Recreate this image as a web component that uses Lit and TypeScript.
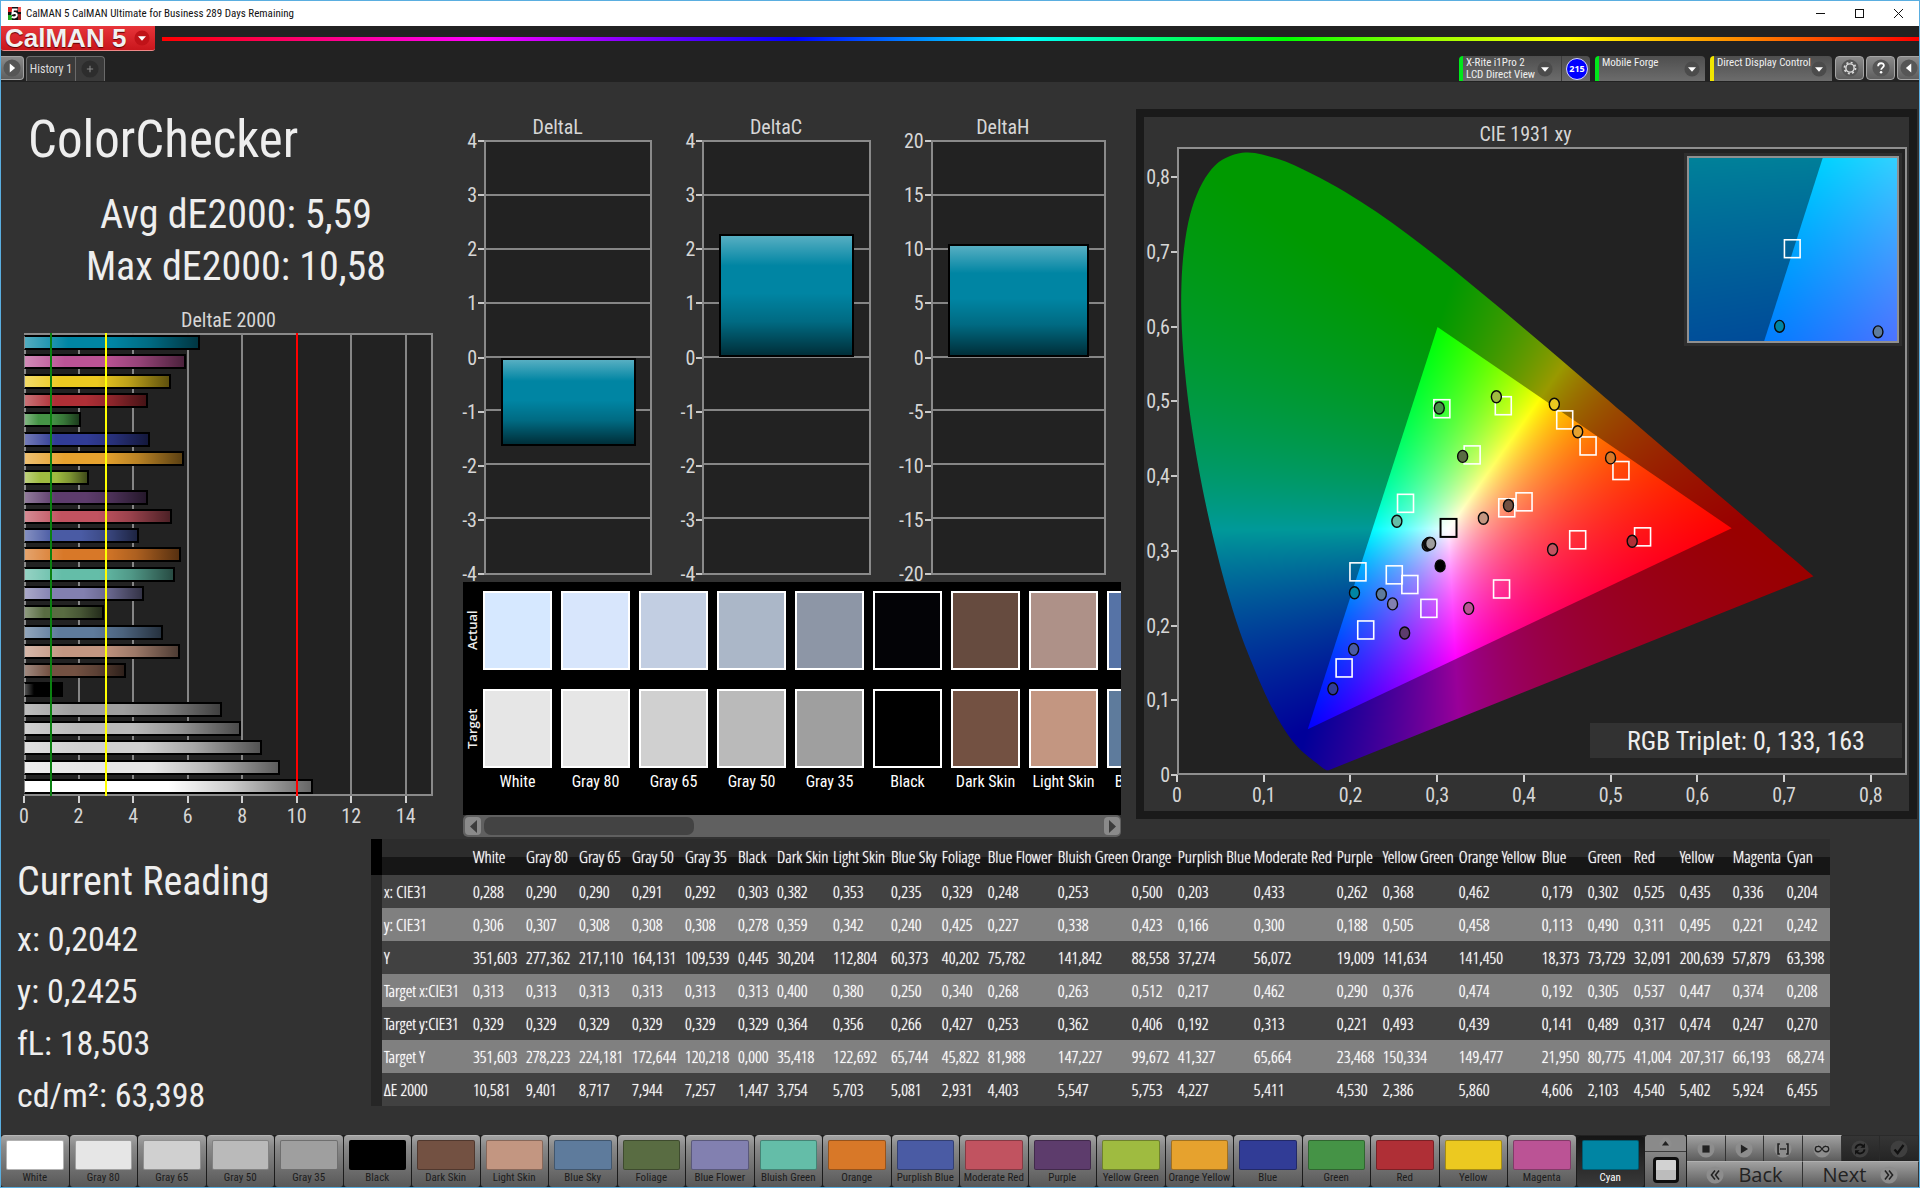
import { LitElement, html, svg, css } from "lit";
import { customElement } from "lit/decorators.js";

interface Patch {
  name: string;
  color: string;
  /** x, y, Y, target x, target y, target Y, dE 2000 as shown in the table */
  v: string[];
  /** relative width of the table column */
  w: number;
}

const p = (name: string, color: string, w: number, values: string): Patch => ({
  name,
  color,
  w,
  v: values.split(" "),
});

const PATCHES: Patch[] = [
  p("White", "#ffffff", 53, "0,288 0,306 351,603 0,313 0,329 351,603 10,581"),
  p("Gray 80", "#e6e6e6", 53, "0,290 0,307 277,362 0,313 0,329 278,223 9,401"),
  p("Gray 65", "#d0d0d0", 53, "0,290 0,308 217,110 0,313 0,329 224,181 8,717"),
  p("Gray 50", "#bababa", 53, "0,291 0,308 164,131 0,313 0,329 172,644 7,944"),
  p("Gray 35", "#9f9f9f", 53, "0,292 0,308 109,539 0,313 0,329 120,218 7,257"),
  p("Black", "#000000", 39, "0,303 0,278 0,445 0,313 0,329 0,000 1,447"),
  p("Dark Skin", "#735142", 56, "0,382 0,359 30,204 0,400 0,364 35,418 3,754"),
  p("Light Skin", "#c39681", 58, "0,353 0,342 112,804 0,380 0,356 122,692 5,703"),
  p("Blue Sky", "#5e7b9c", 51, "0,235 0,240 60,373 0,250 0,266 65,744 5,081"),
  p("Foliage", "#596c42", 46, "0,329 0,425 40,202 0,340 0,427 45,822 2,931"),
  p("Blue Flower", "#8280b0", 70, "0,248 0,227 75,782 0,268 0,253 81,988 4,403"),
  p("Bluish Green", "#64bda8", 74, "0,253 0,338 141,842 0,263 0,362 147,227 5,547"),
  p("Orange", "#d87828", 46, "0,500 0,423 88,558 0,512 0,406 99,672 5,753"),
  p("Purplish Blue", "#4a5ba4", 76, "0,203 0,166 37,274 0,217 0,192 41,327 4,227"),
  p("Moderate Red", "#c15360", 83, "0,433 0,300 56,072 0,462 0,313 65,664 5,411"),
  p("Purple", "#5d3c6c", 46, "0,262 0,188 19,009 0,290 0,221 23,468 4,530"),
  p("Yellow Green", "#9fbb40", 76, "0,368 0,505 141,634 0,376 0,493 150,334 2,386"),
  p("Orange Yellow", "#e6a22e", 83, "0,462 0,458 141,450 0,474 0,439 149,477 5,860"),
  p("Blue", "#313c96", 46, "0,179 0,113 18,373 0,192 0,141 21,950 4,606"),
  p("Green", "#459346", 46, "0,302 0,490 73,729 0,305 0,489 80,775 2,103"),
  p("Red", "#af2f36", 46, "0,525 0,311 32,091 0,537 0,317 41,004 4,540"),
  p("Yellow", "#ecc920", 53, "0,435 0,495 200,639 0,447 0,474 207,317 5,402"),
  p("Magenta", "#bb5395", 54, "0,336 0,221 57,879 0,374 0,247 66,193 5,924"),
  p("Cyan", "#0085a3", 45, "0,204 0,242 63,398 0,208 0,270 68,274 6,455"),
];

const ROWS = ["x: CIE31", "y: CIE31", "Y", "Target x:CIE31", "Target y:CIE31", "Target Y", "ΔE 2000"];

const ACTUAL = ["#d6e8ff", "#d8e6fc", "#c2cee2", "#abb7c8", "#8d96a6", "#030306", "#664b3f", "#ae9188", "#5673a6"];
const TARGET = ["#e6e6e6", "#e6e6e6", "#d0d0d0", "#bababa", "#9f9f9f", "#000000", "#735142", "#c39681", "#5e7b9c"];

const num = (s: string) => parseFloat(s.replace(",", "."));

/* ---------- chromaticity diagram ---------- */

type Pt = [number, number];
interface Range {
  x0: number;
  x1: number;
  y0: number;
  y1: number;
}

const LOCUS: Pt[] = [
  [0.1741, 0.005], [0.1714, 0.0051], [0.1689, 0.0069], [0.1644, 0.0109], [0.1566, 0.0177], [0.151, 0.0227],
  [0.144, 0.0297], [0.1355, 0.0399], [0.1241, 0.0578], [0.1096, 0.0868], [0.0913, 0.1327], [0.0687, 0.2007],
  [0.0454, 0.295], [0.0235, 0.4127], [0.0082, 0.5384], [0.0039, 0.6548], [0.0139, 0.7502], [0.0389, 0.812],
  [0.0743, 0.8338], [0.1142, 0.8262], [0.1547, 0.8059], [0.1929, 0.7816], [0.2296, 0.7543], [0.2658, 0.7243],
  [0.3016, 0.6923], [0.3373, 0.6589], [0.3731, 0.6245], [0.4087, 0.5896], [0.4441, 0.5547], [0.4788, 0.5202],
  [0.5125, 0.4866], [0.5752, 0.4242], [0.627, 0.3725], [0.6658, 0.334], [0.6915, 0.3083], [0.726, 0.274],
  [0.7347, 0.2653],
];
const TRIANGLE: Pt[] = [[0.64, 0.33], [0.3, 0.6], [0.15, 0.06]];

const FULL: Range = { x0: 0, x1: 0.8415, y0: 0, y1: 0.8403 };
const INSET: Range = { x0: 0.1755, x1: 0.2409, y0: 0.2369, y1: 0.3031 };

function field(w: number, h: number, r: Range, gain: number): HTMLCanvasElement {
  const c = document.createElement("canvas");
  c.width = w;
  c.height = h;
  const g = c.getContext("2d")!;
  const img = g.createImageData(w, h);
  for (let j = 0; j < h; j++) {
    const y = Math.max(1e-4, r.y1 - ((j + 0.5) / h) * (r.y1 - r.y0));
    for (let i = 0; i < w; i++) {
      const x = r.x0 + ((i + 0.5) / w) * (r.x1 - r.x0);
      const z = 1 - x - y;
      const R = Math.max(0, 3.2406 * x - 1.5372 * y - 0.4986 * z);
      const G = Math.max(0, -0.9689 * x + 1.8758 * y + 0.0415 * z);
      const B = Math.max(0, 0.0557 * x - 0.204 * y + 1.057 * z);
      const m = Math.max(R, G, B, 1e-6);
      const o = (j * w + i) * 4;
      img.data[o] = (255 * gain * R) / m;
      img.data[o + 1] = (255 * gain * G) / m;
      img.data[o + 2] = (255 * gain * B) / m;
      img.data[o + 3] = 255;
    }
  }
  g.putImageData(img, 0, 0);
  return c;
}

function paintDiagram(canvas: HTMLCanvasElement, r: Range) {
  const w = canvas.clientWidth;
  const h = canvas.clientHeight;
  if (!w || !h) return;
  canvas.width = w;
  canvas.height = h;
  const g = canvas.getContext("2d")!;
  const at = ([x, y]: Pt): Pt => [((x - r.x0) / (r.x1 - r.x0)) * w, ((r.y1 - y) / (r.y1 - r.y0)) * h];

  g.save();
  g.beginPath();
  const q = LOCUS.map(at);
  g.moveTo(...q[0]);
  for (let i = 0; i < q.length - 1; i++) {
    const a = q[Math.max(0, i - 1)];
    const b = q[i];
    const c = q[i + 1];
    const d = q[Math.min(q.length - 1, i + 2)];
    g.bezierCurveTo(
      b[0] + (c[0] - a[0]) / 6, b[1] + (c[1] - a[1]) / 6,
      c[0] - (d[0] - b[0]) / 6, c[1] - (d[1] - b[1]) / 6,
      c[0], c[1],
    );
  }
  g.closePath();
  g.clip();
  g.drawImage(field(w, h, r, 0.6), 0, 0);
  g.restore();

  g.save();
  g.beginPath();
  TRIANGLE.map(at).forEach((t, i) => (i ? g.lineTo(...t) : g.moveTo(...t)));
  g.closePath();
  g.clip();
  g.drawImage(field(w, h, r, 1), 0, 0);
  g.restore();
}

@customElement("cie-diagram")
export class CieDiagram extends LitElement {
  static properties = { inset: { type: Boolean } };
  declare inset: boolean;

  static styles = css`
    :host { display: block; position: relative; overflow: hidden; }
    .layer { position: absolute; inset: 0; width: 100%; height: 100%; display: block; }
  `;

  private observer?: ResizeObserver;

  private paint() {
    const c = this.renderRoot.querySelector("canvas");
    if (c) paintDiagram(c, this.inset ? INSET : FULL);
  }

  firstUpdated() {
    this.paint();
    this.observer = new ResizeObserver(() => this.paint());
    this.observer.observe(this);
  }

  disconnectedCallback() {
    super.disconnectedCallback();
    this.observer?.disconnect();
  }

  render() {
    const r = this.inset ? INSET : FULL;
    const W = this.inset ? 212 : 729;
    const H = this.inset ? 185 : 626;
    const X = (x: number) => ((x - r.x0) / (r.x1 - r.x0)) * W;
    const Y = (y: number) => ((r.y1 - y) / (r.y1 - r.y0)) * H - 1;
    const colored = PATCHES.filter((_, i) => i > 5);
    const targets = this.inset ? PATCHES.slice(-1) : colored;
    const actual = this.inset ? PATCHES.filter((c) => c.name === "Cyan" || c.name === "Blue Sky") : PATCHES;
    return html`
      <canvas class="layer"></canvas>
      <svg class="layer" viewBox="0 0 ${W} ${H}" preserveAspectRatio="none" aria-hidden="true">
        ${targets.map((t) => svg`<rect x=${X(num(t.v[3])) - 8} y=${Y(num(t.v[4])) - 9} width="16" height="18"
          fill="none" stroke="#fff" stroke-width="1.6"/>`)}
        ${this.inset ? "" : svg`<rect x=${X(0.3127) - 8} y=${Y(0.329) - 9} width="16" height="18"
          fill="#fff" fill-opacity="0.5" stroke="#000" stroke-width="2"/>`}
        ${actual.map((t, i) => svg`<ellipse cx=${X(num(t.v[0]))} cy=${Y(num(t.v[1]))} rx="5" ry="6"
          fill=${!this.inset && i < 4 ? "#555" : t.color} stroke="#0a0a0a" stroke-width="1.4"/>`)}
      </svg>`;
  }
}

/* ---------- page ---------- */

const caret = html`<svg class="caret" viewBox="0 0 18 18" aria-hidden="true">
  <circle cx="9" cy="9" r="8.5" fill="#4b4b4b" /><path d="M4.5 7h9L9 12z" fill="#fff" /></svg>`;

const round = (body: unknown) => html`<svg class="round" viewBox="0 0 20 20" aria-hidden="true">
  <circle cx="10" cy="10" r="9.5" class="disc" />${body}</svg>`;

@customElement("app-root")
export class AppRoot extends LitElement {
  static styles = css`
    :host {
      display: block;
      --face: "Roboto Condensed", Roboto, "Open Sans", sans-serif;
      font-family: var(--face);
      color: #eee;
    }
    * { box-sizing: border-box; }
    button { font: inherit; color: inherit; border: 0; padding: 0; margin: 0; background: none; }
    h1, h2, p { margin: 0; font-weight: 400; }

    .win { min-height: 100vh; display: flex; flex-direction: column; background: #323232; border: 1px solid #5aaee0; }

    .titlebar { height: 25px; background: #fff; color: #111; display: flex; align-items: center; padding: 0 1px 0 7px; font-size: 11px; }
    .titlebar .name { flex: 1; padding-left: 5px; }
    .appicon { width: 13px; height: 13px; }
    .winbtn { width: 39px; height: 24px; display: grid; place-items: center; }
    .winbtn svg { width: 11px; height: 11px; }

    .header { background: #222; height: 56px; }
    .brandrow { display: flex; align-items: flex-start; gap: 7px; height: 30px; }
    .logo { width: 154px; height: 25px; background: linear-gradient(#e8353a, #c9161c); border-radius: 0 0 3px 3px; border-bottom: 1px solid #e88; display: flex; align-items: center; overflow: hidden; padding-left: 4px; text-align: left; }
    .logo .word { font: 700 26px/22px "Liberation Sans", Arial, sans-serif; color: #f1f1f1; text-shadow: 0 1px 1px #5a0000; white-space: nowrap; flex: 1; }
    .logo .caret { margin-right: 5px; }
    .logo .caret circle { fill: #c01218; }
    .rainbow { flex: 1; height: 4px; margin-top: 11px; background: linear-gradient(90deg, #f00 0%, #f0f 18%, #00f 36%, #0ff 49%, #0f0 64%, #9f0 72%, #ff0 80%, #f80 90%, #f00 100%); }
    .tools { display: flex; height: 26px; align-items: flex-start; }
    .caret { width: 16px; height: 16px; flex: none; }
    .square { width: 29px; height: 24px; border: 1px solid #a5a5a5; border-radius: 4px; background: linear-gradient(#8a8a8a, #5e5e5e); display: grid; place-items: center; margin-right: 2px; }
    .square.edge { width: 23px; border-left: 0; border-radius: 0 4px 4px 0; }
    .square.cut { width: 22px; border-right: 0; border-radius: 4px 0 0 4px; margin-right: 0; }
    .round { width: 18px; height: 18px; }
    .disc { fill: #565656; }
    .tab { height: 25px; border: 1px solid #6a6a6a; border-bottom: 0; background: #3a3a3a; color: #ddd; font-size: 12px; display: grid; place-items: center; }
    .tab.first { width: 50px; border-radius: 4px 0 0 0; }
    .tab.add { width: 29px; border-left: 0; border-radius: 0 4px 0 0; }
    .tab .disc { fill: #2d2d2d; }
    .spacer { flex: 1; }
    .device { height: 25px; background: linear-gradient(#4e4e4e, #6c6c6c); border-left: 4px solid #00e81a; border-radius: 4px 4px 0 0; display: flex; align-items: center; padding: 0 5px 0 3px; margin-right: 5px; font-size: 11px; line-height: 12px; color: #f0f0f0; white-space: nowrap; text-align: left; }
    .device.yellow { border-left-color: #f2e600; }
    .device .label { flex: 1; align-self: flex-start; min-width: 0; padding-top: 1px; }
    .d1 { width: 131px; padding-right: 0; }
    .d2 { width: 110px; }
    .d3 { width: 122px; margin-right: 3px; }
    .d1 .caret { margin-right: 8px; }
    .badge { width: 29px; height: 25px; border-left: 1px solid #3c3c3c; display: grid; place-items: center end; padding-right: 2px; }
    .badge b { width: 22px; height: 22px; border-radius: 50%; border: 1px solid #d8d8ff; background: #00f; font: 700 9px/20px "Open Sans", sans-serif; text-align: center; color: #fff; }

    .main { flex: 1; display: grid; grid-template-rows: 757fr 296fr; }
    .upper { display: grid; grid-template-columns: 462fr 658fr 798fr; }

    .summary { display: flex; flex-direction: column; padding: 26px 30px 11px 23px; }
    .summary h1 { font-size: 51px; line-height: 64px; padding-left: 4px; }
    .stats { font-size: 40px; line-height: 52px; text-align: center; padding: 17px 0 0 15px; }
    .ctitle { font-size: 20px; line-height: 24px; text-align: center; color: #d6d6d6; }
    .summary .ctitle { padding-top: 15px; height: 40px; }
    .deplot { flex: 1; position: relative; box-shadow: inset 0 0 0 2px #8a8a8a; background: #222; display: flex; flex-direction: column; }
    .slot { flex: 1; display: flex; align-items: center; position: relative; z-index: 1; min-height: 0; }
    .hbar { height: 15px; border: 2px solid #000; border-left: 1px solid #8a8a8a; background-image: linear-gradient(90deg, rgba(255,255,255,.32), rgba(255,255,255,0) 25%, rgba(0,0,0,0) 50%, rgba(0,0,0,.2) 72%, rgba(0,0,0,.6)); }
    .vline { position: absolute; top: 0; bottom: 0; width: 2px; background: #868686; }
    .vline.good { background: #0a8010; z-index: 2; }
    .vline.warn { background: #ff0; z-index: 2; }
    .vline.bad { background: #f00; z-index: 2; }
    .xaxis { display: flex; height: 32px; }
    .xcell { flex: none; }
    .xtick { width: 0; display: flex; flex-direction: column; align-items: center; font-size: 20px; line-height: 27px; color: #d6d6d6; white-space: nowrap; }
    .xtick::before { content: ""; width: 2px; height: 7px; background: #d0d0d0; }

    .middle { display: flex; flex-direction: column; min-width: 0; padding-bottom: 2px; }
    .deltas { display: flex; flex: 1; gap: 29px; padding: 22px 15px 7px 0; }
    .dchart { flex: 189; display: flex; flex-direction: column; }
    .dchart.wide { flex: 206; }
    .dchart .ctitle { height: 36px; padding-top: 11px; }
    .dbody { flex: 1; display: flex; }
    .ylabels { display: flex; flex-direction: column; justify-content: space-between; width: 21px; padding: 1px 0; }
    .wide .ylabels { width: 31px; }
    .ylab { height: 0; display: flex; align-items: center; justify-content: flex-end; gap: 1px; font-size: 20px; line-height: 24px; color: #d6d6d6; }
    .ylab::after { content: ""; width: 6px; height: 2px; background: #c8c8c8; flex: none; }
    .dplot { flex: 1; position: relative; border: 2px solid #8a8a8a; background: #222; display: flex; flex-direction: column; }
    .dcell { flex: 1; }
    .dcell + .dcell { border-top: 2px solid #868686; margin-top: -2px; }
    .vbar { position: absolute; left: 9%; right: 9%; border: 2px solid #000; background-color: #0085a3; background-image: linear-gradient(rgba(255,255,255,.34), rgba(255,255,255,0) 25%, rgba(0,0,0,0) 48%, rgba(0,0,0,.2) 72%, rgba(0,0,0,.65)); }

    .swatches { height: 233px; background: #000; display: grid; grid-template-columns: 20px 1fr; overflow: hidden; position: relative; }
    .side { display: grid; grid-template-rows: 79px 79px; row-gap: 19px; padding-top: 9px; }
    .side span { writing-mode: vertical-rl; rotate: 180deg; text-align: center; font: 600 13px/18px "Open Sans", sans-serif; }
    .strip { display: flex; gap: 9px; overflow: hidden; padding-top: 9px; }
    .sw { flex: none; width: 69px; text-align: center; font-size: 16px; line-height: 20px; color: #fff; white-space: nowrap; }
    .chip { height: 79px; border: 2px solid #fff; margin-bottom: 19px; }
    .chip.t { margin-bottom: 4px; }
    .scroll { height: 22px; background: #606060; border-radius: 5px; display: flex; align-items: center; padding: 1px 1px 1px 2px; gap: 3px; }
    .arrow { width: 16px; height: 18px; border-radius: 4px; background: #8a8a8a; display: grid; place-items: center; }
    .arrow svg { width: 9px; height: 13px; }
    .track { flex: 1; height: 18px; }
    .thumb { width: 34%; height: 18px; border-radius: 7px; background: #434343; }

    .cie { margin: 27px 2px 20px 15px; border: 8px solid #1a1a1a; background: #323232; padding: 5px 2px 0 0; display: grid; grid-template-columns: 33px 1fr; grid-template-rows: 25px 1fr 36px; min-width: 0; }
    .cie .ctitle { grid-column: 1 / 3; }
    .cyaxis { display: flex; flex-direction: column-reverse; min-height: 0; height: 100%; }
    .cycell { flex: none; display: flex; flex-direction: column; justify-content: flex-end; }
    .cplot { position: relative; border: 2px solid #8f8f8f; background: #222; }
    .cplot > cie-diagram.full { position: absolute; inset: -1px; }
    .zoomed { position: absolute; top: 4px; right: 3px; width: 30%; height: 31%; padding: 3px; background: #2e2e2e; display: grid; }
    .zoomed cie-diagram { border: 2px solid #909090; }
    .triplet { position: absolute; right: 3px; bottom: 15px; width: 43%; height: 35px; background: #323232; font-size: 26px; line-height: 36px; text-align: center; white-space: nowrap; }
    .cie .xaxis { grid-column: 2; height: 36px; }

    .lower { display: grid; grid-template-columns: 370fr 1459fr 89fr; }
    .reading { padding: 15px 0 0 16px; font-size: 34px; line-height: 52px; white-space: nowrap; }
    .reading h2 { font-size: 40px; line-height: 56px; margin-bottom: 3px; }
    .tablewrap { min-width: 0; }
    table { width: 100%; border-collapse: collapse; table-layout: fixed; font-family: "Open Sans Condensed Light", "Open Sans Condensed", "Roboto Condensed", sans-serif; font-size: 17px; line-height: 21px; color: #fff; text-shadow: 0 0 1px #fff; }
    th, td { font-weight: 400; text-align: left; padding: 6px 0 6px 2px; white-space: nowrap; overflow: visible; }
    thead tr { background: linear-gradient(#2c2c2c 0 50%, #161616 50% 100%); }
    thead td, thead th { padding: 7px 0 8px 2px; }
    tbody tr { background: #414141; }
    tbody tr:nth-child(even) { background: #808080; }
    .gutter { background: #262626; }
    thead .gutter { background: #000; }

    .footer { height: 52px; display: grid; grid-template-columns: 1643fr 43fr 232fr; background: #1c1c1c; }
    .picks { display: flex; gap: 1px; }
    .pick { flex: 1; min-width: 0; border-radius: 4px 4px 3px 3px; background: linear-gradient(#a3a3a3, #8a8a8a 20%, #585858); border-top: 1px solid #b5b5b5; display: flex; flex-direction: column; align-items: center; padding: 4px 5px 0; font-size: 11px; line-height: 14px; color: #1c1c1c; white-space: nowrap; height: 52px; }
    .pick .well { width: 100%; height: 30px; border-radius: 2px; border: 1px solid rgba(0, 0, 0, .3); margin-bottom: 1px; }
    .pick.on { background: linear-gradient(#151515, #3a3a3a); border-top-color: #222; color: #fff; }
    .stack { display: flex; flex-direction: column; height: 52px; margin: 0 1px; border-radius: 4px 4px 0 0; overflow: hidden; background: linear-gradient(#9a9a9a, #5a5a5a); }
    .up { height: 17px; display: grid; place-items: center; border-bottom: 1px solid #3c3c3c; background: #8a8a8a; }
    .up .round { width: 13px; height: 13px; }
    .page { flex: 1; display: grid; place-items: center; }
    .sheet { width: 26px; height: 26px; border: 3px solid #0d0d0d; border-radius: 4px; background: linear-gradient(#d2d2d2 50%, #bcbcbc 50%); }
    .transport { display: grid; grid-template-rows: 26px 26px; }
    .trow { display: grid; grid-template-columns: repeat(6, 1fr); }
    .tbtn { display: grid; place-items: center; background: linear-gradient(#a0a0a0, #5c5c5c); border-right: 1px solid #333; border-top: 1px solid #b5b5b5; }
    .tbtn .disc, .nav .disc, .up .disc { fill: #8d8d8d; }
    .tbtn.off { background: linear-gradient(#353535, #242424); border-color: #2a2a2a; }
    .tbtn.off .disc { fill: #3f3f3f; }
    .nrow { display: grid; grid-template-columns: 1fr 1fr; }
    .nav { display: flex; align-items: center; justify-content: center; gap: 14px; background: linear-gradient(#a0a0a0, #5a5a5a); border-right: 1px solid #333; border-top: 1px solid #b0b0b0; color: #222; font: 400 20px/24px "Open Sans", sans-serif; }
  `;

  private deltaChart(title: string, max: number, value: number, wide = false) {
    const ticks = [4, 3, 2, 1, 0, -1, -2, -3, -4].map((t) => (t * max) / 4);
    const half = 50 / max;
    const top = value > 0 ? 50 - value * half : 50;
    return html`<section class="dchart ${wide ? "wide" : ""}">
      <h2 class="ctitle">${title}</h2>
      <div class="dbody">
        <div class="ylabels">${ticks.map((t) => html`<div class="ylab">${t}</div>`)}</div>
        <div class="dplot">
          ${ticks.slice(1).map(() => html`<div class="dcell"></div>`)}
          <div class="vbar" style="top:${top}%;height:${Math.abs(value) * half}%"></div>
        </div>
      </div>
    </section>`;
  }

  private header() {
    return html`
      <div class="titlebar">
        <svg class="appicon" viewBox="0 0 13 13" aria-hidden="true">
          <rect width="13" height="13" fill="#111" /><rect width="4" height="5" fill="#d22" /><rect y="8" width="4" height="5" fill="#2a2" />
          <rect x="10" width="3" height="5" fill="#e55" /><rect x="10" y="7" width="3" height="6" fill="#922" />
          <path d="M9.5 2.5H5L4.5 6.5C7 5.4 9 6.2 8.8 8.3 8.6 10.4 5.8 10.9 3.8 9.8" fill="none" stroke="#fff" stroke-width="2" />
        </svg>
        <span class="name">CalMAN 5 CalMAN Ultimate for Business 289 Days Remaining</span>
        <button class="winbtn" aria-label="Minimize"><svg viewBox="0 0 11 11"><path d="M1 5.5h9" stroke="#111" /></svg></button>
        <button class="winbtn" aria-label="Maximize"><svg viewBox="0 0 11 11"><rect x="1.5" y="1.5" width="8" height="8" fill="none" stroke="#111" /></svg></button>
        <button class="winbtn" aria-label="Close"><svg viewBox="0 0 11 11"><path d="M1 1l9 9M10 1l-9 9" stroke="#111" /></svg></button>
      </div>
      <header class="header">
        <div class="brandrow">
          <button class="logo"><span class="word">CalMAN 5</span>${caret}</button>
          <div class="rainbow"></div>
        </div>
        <div class="tools">
          <button class="square edge" aria-label="Expand">${round(svg`<path d="M7.5 5l6 5-6 5z" fill="#fff"/>`)}</button>
          <button class="tab first">History 1</button>
          <button class="tab add" aria-label="Add tab">${round(svg`<path d="M10 6.5v7M6.5 10h7" stroke="#888" stroke-width="1.2"/>`)}</button>
          <div class="spacer"></div>
          <div class="device d1">
            <span class="label">X-Rite i1Pro 2<br />LCD Direct View</span>${caret}
            <span class="badge"><b>215</b></span>
          </div>
          <button class="device d2"><span class="label">Mobile Forge</span>${caret}</button>
          <button class="device yellow d3"><span class="label">Direct Display Control</span>${caret}</button>
          <button class="square" aria-label="Settings">
            ${round(svg`<circle cx="10" cy="10" r="4.6" fill="none" stroke="#ddd" stroke-width="1.6"/>
              <circle cx="10" cy="10" r="6.2" fill="none" stroke="#ddd" stroke-width="1.8" stroke-dasharray="2.2 2.67"/>`)}
          </button>
          <button class="square" aria-label="Help">
            ${round(svg`<path d="M6.8 8c0-4.4 6.6-4.2 6.4-.6-.1 2.2-3 2.2-3 4.6" fill="none" stroke="#fff" stroke-width="2"/><circle cx="10.1" cy="14.6" r="1.4" fill="#fff"/>`)}
          </button>
          <button class="square cut" aria-label="Collapse">${round(svg`<path d="M12.5 5l-6 5 6 5z" fill="#fff"/>`)}</button>
        </div>
      </header>`;
  }

  private summary() {
    const at = (v: number) => `left:calc(${(v / 15) * 100}% - 1px)`;
    return html`<section class="summary">
      <h1>ColorChecker</h1>
      <div class="stats"><p>Avg dE2000: 5,59</p><p>Max dE2000: 10,58</p></div>
      <h2 class="ctitle">DeltaE 2000</h2>
      <div class="deplot">
        ${[2, 4, 6, 8, 10, 12, 14].map((v) => html`<i class="vline" style=${at(v)}></i>`)}
        ${[...PATCHES].reverse().map(
          (c) => html`<div class="slot"><div class="hbar" style="width:${(num(c.v[6]) / 15) * 100}%;background-color:${c.color}"></div></div>`,
        )}
        <i class="vline good" style=${at(1)}></i>
        <i class="vline warn" style=${at(3)}></i>
        <i class="vline bad" style=${at(10)}></i>
      </div>
      <div class="xaxis">
        ${[0, 2, 4, 6, 8, 10, 12, 14].map((v) => html`<div class="xcell" style="width:${(2 / 15) * 100}%"><div class="xtick">${v}</div></div>`)}
      </div>
    </section>`;
  }

  private middle() {
    return html`<section class="middle">
      <div class="deltas">
        ${this.deltaChart("DeltaL", 4, -1.65)} ${this.deltaChart("DeltaC", 4, 2.3)} ${this.deltaChart("DeltaH", 20, 10.55, true)}
      </div>
      <div class="swatches">
        <div class="side"><span>Actual</span><span>Target</span></div>
        <div class="strip">
          ${ACTUAL.map(
            (a, i) => html`<div class="sw">
              <div class="chip" style="background:${a}"></div>
              <div class="chip t" style="background:${TARGET[i]}"></div>
              ${PATCHES[i].name}
            </div>`,
          )}
        </div>
      </div>
      <div class="scroll">
        <button class="arrow" aria-label="Scroll left"><svg viewBox="0 0 9 13"><path d="M8 0v13L1 6.500z" fill="#3c3c3c" /></svg></button>
        <div class="track"><div class="thumb"></div></div>
        <button class="arrow" aria-label="Scroll right"><svg viewBox="0 0 9 13"><path d="M1 0v13l7-6.500z" fill="#3c3c3c" /></svg></button>
      </div>
    </section>`;
  }

  private cie() {
    const ticks = [0, 1, 2, 3, 4, 5, 6, 7, 8];
    const label = (t: number) => (t ? `0,${t}` : "0");
    return html`<section class="cie">
      <h2 class="ctitle">CIE 1931 xy</h2>
      <div class="cyaxis">
        ${ticks.map((t) => html`<div class="cycell" style="height:${10 / FULL.y1}%"><div class="ylab">${label(t)}</div></div>`)}
      </div>
      <div class="cplot">
        <cie-diagram class="full"></cie-diagram>
        <div class="zoomed"><cie-diagram inset></cie-diagram></div>
        <div class="triplet">RGB Triplet: 0, 133, 163</div>
      </div>
      <div class="xaxis">
        ${ticks.map((t) => html`<div class="xcell" style="width:${10 / FULL.x1}%"><div class="xtick">${label(t)}</div></div>`)}
      </div>
    </section>`;
  }

  private table() {
    const pct = (w: number) => `width:${(w / 1459) * 100}%`;
    return html`<div class="tablewrap"><table>
      <colgroup>
        <col style=${pct(11)} /><col style=${pct(89)} />
        ${PATCHES.map((c) => html`<col style=${pct(c.w)} />`)}
      </colgroup>
      <thead>
        <tr><td class="gutter"></td><td></td>${PATCHES.map((c) => html`<th scope="col">${c.name}</th>`)}</tr>
      </thead>
      <tbody>
        ${ROWS.map(
          (r, i) => html`<tr><td class="gutter"></td><th scope="row">${r}</th>${PATCHES.map((c) => html`<td>${c.v[i]}</td>`)}</tr>`,
        )}
      </tbody>
    </table></div>`;
  }

  private footer() {
    const dark = "#222";
    return html`<footer class="footer">
      <div class="picks">
        ${PATCHES.map(
          (c) => html`<button class="pick ${c.name === "Cyan" ? "on" : ""}"><span class="well" style="background:${c.color}"></span>${c.name}</button>`,
        )}
      </div>
      <div class="stack">
        <button class="up" aria-label="More">${round(svg`<path d="M4.500 13L10 6l5.500 7z" fill=${dark}/>`)}</button>
        <button class="page" aria-label="Window"><span class="sheet"></span></button>
      </div>
      <div class="transport">
        <div class="trow">
          <button class="tbtn" aria-label="Stop">${round(svg`<rect x="6" y="6" width="8" height="8" fill=${dark}/>`)}</button>
          <button class="tbtn" aria-label="Play">${round(svg`<path d="M6.500 5l8 5-8 5z" fill=${dark}/>`)}</button>
          <button class="tbtn" aria-label="Read series">
            ${round(svg`<path d="M6.500 4.500H4.500v11h2M13.500 4.500h2v11h-2" fill="none" stroke=${dark} stroke-width="1.800"/><path d="M7 10h6" stroke=${dark} stroke-width="2" stroke-dasharray="1.500 .75"/>`)}
          </button>
          <button class="tbtn" aria-label="Continuous">
            ${round(svg`<path d="M10 10C8 7 6.800 6.800 5.500 7a3 3 0 0 0 0 6c1.300.2 2.500 0 4.500-3s3.200-3.200 4.500-3a3 3 0 0 1 0 6c-1.300.2-2.500 0-4.500-3z" fill="none" stroke=${dark} stroke-width="1.500"/>`)}
          </button>
          <button class="tbtn off" aria-label="Refresh" disabled>
            ${round(svg`<path d="M5 9.500a5 5 0 0 1 8.500-3M15 10.500a5 5 0 0 1-8.500 3" fill="none" stroke="#111" stroke-width="2"/><path d="M15.500 3.500v5h-5zM4.500 16.500v-5h5z" fill="#111"/>`)}
          </button>
          <button class="tbtn off" aria-label="Accept" disabled>${round(svg`<path d="M5 10.500l3.500 4L15 5.500" fill="none" stroke="#111" stroke-width="2.600"/>`)}</button>
        </div>
        <div class="nrow">
          <button class="nav">${round(svg`<path d="M10 5l-4 5 4 5M14.500 5l-4 5 4 5" fill="none" stroke=${dark} stroke-width="1.700"/>`)}Back</button>
          <button class="nav">Next${round(svg`<path d="M5.500 5l4 5-4 5M10 5l4 5-4 5" fill="none" stroke=${dark} stroke-width="1.700"/>`)}</button>
        </div>
      </div>
    </footer>`;
  }

  render() {
    return html`<div class="win">
      ${this.header()}
      <main class="main">
        <div class="upper">${this.summary()} ${this.middle()} ${this.cie()}</div>
        <div class="lower">
          <section class="reading">
            <h2>Current Reading</h2>
            <p>x: 0,2042</p><p>y: 0,2425</p><p>fL: 18,503</p><p>cd/m²: 63,398</p>
          </section>
          ${this.table()}
        </div>
      </main>
      ${this.footer()}
    </div>`;
  }
}
